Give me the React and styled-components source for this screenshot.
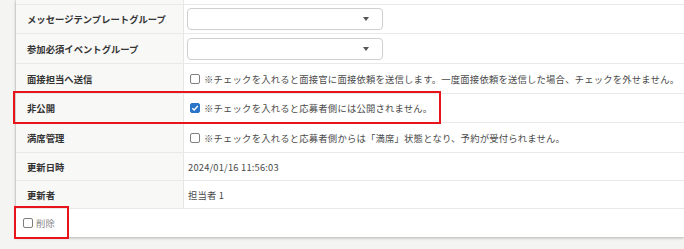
import React from "react";
import styled, { createGlobalStyle } from "styled-components";

const Global = createGlobalStyle`
  html, body { margin: 0; padding: 0; }
  body {
    background: #f4f4f3;
    font-family: "Noto Sans CJK JP", "Noto Sans", sans-serif;
    font-size: 9.33px;
    color: #444;
  }
`;

const Page = styled.div`
  position: relative;
  width: 684px;
  height: 249px;
  overflow: hidden;
`;

const Card = styled.div`
  margin-left: 16px;
  background: #fff;
  box-shadow: 0 1px 3px rgba(0, 0, 0, 0.28), -1px 0 0 #e6e6e6;
`;

const Row = styled.div`
  display: grid;
  grid-template-columns: 168px 1fr;
  height: ${(p) => p.$h}px;
  border-bottom: 1px solid #e9e9e9;
`;

const Label = styled.div`
  display: flex;
  align-items: center;
  padding-left: 11px;
  background: #f8f8f7;
  border-right: 1px solid #e6e6e6;
  font-weight: 700;
  color: #333;
  white-space: nowrap;
`;

const Value = styled.div`
  display: flex;
  align-items: center;
  padding-left: ${(p) => p.$pl ?? 3}px;
  gap: 4px;
  color: #4a4a4a;
  letter-spacing: 0.2px;
  white-space: nowrap;
`;

const Select = styled.div`
  box-sizing: border-box;
  width: 196px;
  height: 22px;
  border: 1px solid #cfcfcf;
  border-radius: 4px;
  background: #fff;
  display: flex;
  align-items: center;
  justify-content: flex-end;
  padding-right: 13px;
`;

const Caret = styled.span`
  width: 0;
  height: 0;
  border-left: 3.5px solid transparent;
  border-right: 3.5px solid transparent;
  border-top: 4px solid #555;
`;

const Box = styled.span`
  box-sizing: border-box;
  flex: none;
  width: 10px;
  height: 10px;
  border: 1px solid ${(p) => (p.$checked ? "#2a74c9" : "#7f7f7f")};
  border-radius: 2px;
  background: ${(p) => (p.$checked ? "#2a74c9" : "#fff")};
  display: inline-flex;
  align-items: center;
  justify-content: center;
  margin-left: 3px;
`;

const Footer = styled.div`
  height: 28px;
  display: flex;
  align-items: center;
  gap: 3px;
  padding-left: 4px;
  color: #888;
  letter-spacing: 0.2px;
`;

const Mark = styled.div`
  position: absolute;
  box-sizing: border-box;
  border: 2px solid #e8141b;
  left: ${(p) => p.$x}px;
  top: ${(p) => p.$y}px;
  width: ${(p) => p.$w}px;
  height: ${(p) => p.$h}px;
  pointer-events: none;
`;

function Check({ checked }) {
  return (
    <Box $checked={checked}>
      {checked && (
        <svg width="8" height="8" viewBox="0 0 8 8">
          <path d="M1.3 4.2 L3.2 6 L6.8 2" fill="none" stroke="#fff" strokeWidth="1.4" />
        </svg>
      )}
    </Box>
  );
}

export default function App() {
  return (
    <>
      <Global />
      <Page>
        <Card>
          <Row $h={4}>
            <Label />
            <Value />
          </Row>
          <Row $h={28}>
            <Label>メッセージテンプレートグループ</Label>
            <Value>
              <Select>
                <Caret />
              </Select>
            </Value>
          </Row>
          <Row $h={29}>
            <Label>参加必須イベントグループ</Label>
            <Value>
              <Select>
                <Caret />
              </Select>
            </Value>
          </Row>
          <Row $h={29}>
            <Label>面接担当へ送信</Label>
            <Value>
              <Check />
              ※チェックを入れると面接官に面接依頼を送信します。一度面接依頼を送信した場合、チェックを外せません。
            </Value>
          </Row>
          <Row $h={28}>
            <Label>非公開</Label>
            <Value>
              <Check checked />
              ※チェックを入れると応募者側には公開されません。
            </Value>
          </Row>
          <Row $h={29}>
            <Label>満席管理</Label>
            <Value>
              <Check />
              ※チェックを入れると応募者側からは「満席」状態となり、予約が受付られません。
            </Value>
          </Row>
          <Row $h={27}>
            <Label>更新日時</Label>
            <Value $pl={4}>2024/01/16 11:56:03</Value>
          </Row>
          <Row $h={27}>
            <Label>更新者</Label>
            <Value $pl={4}>担当者 1</Value>
          </Row>
          <Footer>
            <Check />
            削除
          </Footer>
        </Card>
        <Mark $x={13} $y={91} $w={428} $h={33} />
        <Mark $x={14} $y={206} $w={55} $h={33} />
      </Page>
    </>
  );
}
